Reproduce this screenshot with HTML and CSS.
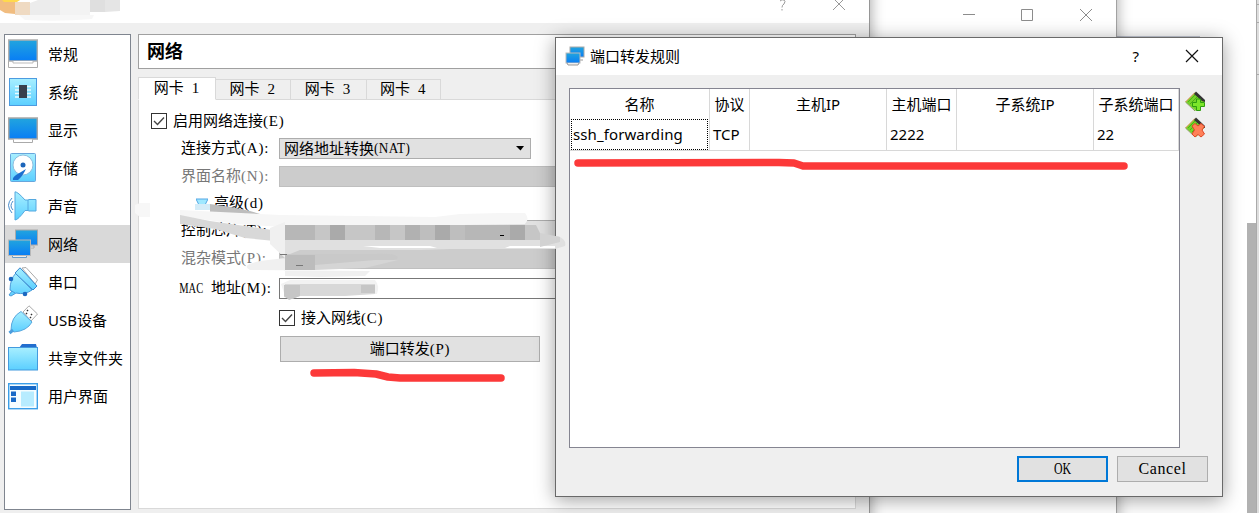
FILE: index.html
```html
<!DOCTYPE html>
<html lang="zh-CN">
<head>
<meta charset="utf-8">
<title>网络</title>
<link rel="stylesheet" href="styles.css">
</head>
<body>
<div class="desktop">
  <div class="edge-strip"><i></i><i></i><i></i></div>
  <div class="scroll-thumb"></div>
  <div class="hint-line"></div>

  <div class="window manager">
    <svg class="caption-icons" width="132" height="14" viewBox="0 0 132 14" fill="none" stroke="#8c8c8c"><path d="M1 6.500H13M59.500 1.500H70.500V12.500H59.500ZM118 1L130 13M130 1L118 13"/></svg>
  </div>

  <div class="window settings">
    <div class="settings-title">
      <svg width="12" height="14" viewBox="0 0 12 14" fill="none" stroke="#999"><path d="M3 1Q5-1 7 0Q9 1 7 4Q5 5 5 7.500M5 9V10.500"/></svg>
      <svg width="12" height="14" viewBox="0 0 12 14" fill="none" stroke="#999"><path d="M0-2L12 10M12-2L0 10"/></svg>
    </div>
    <div class="settings-body">
      <ul class="nav">
        <li><svg width="30" height="30" viewBox="0 0 30 30"><path d="M.5 21V28.500H29.500V21" fill="#fff" stroke="#aaa"/><rect x=".7" y="1" width="28.600" height="21" fill="url(#blue)" stroke="#b0b0b0" stroke-width="1.500"/><path d="M5 22V24H25V22" fill="#fff" stroke="#bbb"/></svg>常规</li>
        <li><svg width="30" height="30" viewBox="0 0 30 30"><rect x="1.500" y="1.500" width="27" height="27" fill="url(#cyan)" stroke="#4c9be0"/><path d="M7 9.500H23M7 13H23M7 16.500H23M7 20H23" stroke="#e8fbff" stroke-width="1.500"/><rect x="11" y="8" width="8" height="13" fill="#38404c"/></svg>系统</li>
        <li><svg width="30" height="30" viewBox="0 0 30 30"><rect x=".7" y="3" width="28.600" height="21" fill="url(#blue)" stroke="#a8a8a8" stroke-width="1.500"/><path d="M5.500 24.500V27.500H24.500V24.500" fill="#fff" stroke="#aaa"/></svg>显示</li>
        <li><svg width="30" height="30" viewBox="0 0 30 30"><rect x="2.500" y=".5" width="25" height="28" rx="1" fill="url(#cyan)" stroke="#68a6dc"/><circle cx="15" cy="12" r="10" fill="#fff" stroke="#90bedd"/><circle cx="15" cy="12" r="2.500" fill="#1b65ba"/><path d="M18 16L8 22Q4 25 5 27L10 27Q14 24 18 16Z" fill="#1a6fd0"/></svg>存储</li>
        <li><svg width="30" height="30" viewBox="0 0 30 30"><path d="M7 .8Q10 1 17 9H20L21 8.500H28V20H21L20 19.500H17Q10 29 7 29Z" fill="url(#cyan)" stroke="#55a8df"/><path d="M20 9V19.500" stroke="#55a8df"/><path d="M4 7Q-3 14 4 22M5 10Q1 15 5 19" fill="none" stroke="#488ccc"/></svg>声音</li>
        <li class="selected"><svg width="30" height="30" viewBox="0 0 30 30"><rect x="7.500" y="1" width="22" height="15" fill="url(#blue)" stroke="#aaa"/><path d="M20 17H26V19H20Z" fill="#eee" stroke="#aaa"/><rect x=".5" y="11" width="22" height="15.500" fill="url(#blue)" stroke="#b8b8b8"/><path d="M4.500 27V28.500H18.500V27" fill="#eee" stroke="#6a9bc8"/></svg>网络</li>
        <li><svg width="30" height="30" viewBox="0 0 30 30"><path d="M14 1L18 .5L29.500 13L27 17Z" fill="#fff" stroke="#aaa"/><path d="M7 26L2 23Q2 12 8 6L24 23Q17 28 8 26L3 29L1 28L4 24" fill="url(#cyan)" stroke="#4a9bda"/><path d="M12 .8L29 19L25 23L7 6Z" fill="url(#cyan)" stroke="#3a88cf"/><circle cx="3" cy="12" r="2.300" fill="#1c68c0"/><circle cx="17" cy="27" r="2.300" fill="#1c68c0"/></svg>串口</li>
        <li><svg width="30" height="30" viewBox="0 0 30 30"><path d="M15 7L21 .8L29.500 9L23 16Z" fill="#fff" stroke="#aaa"/><path d="M19 5L20 6M23 9L24 10M18 8L19 9M22 12L23 13" stroke="#333" stroke-width="1.500"/><path d="M13 6.500L24 17Q19 26 6 27L3 25Q3 12 13 6.500Z" fill="url(#cyan)" stroke="#58a8df"/><path d="M5 25L1.500 28" fill="none" stroke="#4b9dde" stroke-width="3"/></svg>USB设备</li>
        <li><svg width="30" height="30" viewBox="0 0 30 30"><path d="M11 5L14 1H28L29 5Z" fill="#236ece"/><rect x=".5" y="4.500" width="29" height="22.500" fill="url(#cyan)" stroke="#439ade"/></svg>共享文件夹</li>
        <li><svg width="30" height="30" viewBox="0 0 30 30"><rect x=".7" y="2.700" width="28.600" height="25" fill="#f5fdff" stroke="#3b9ee8" stroke-width="1.400"/><path d="M2 5H28V9H2ZM3 10.500H8V15H3ZM3 16.500H8V21H3Z" fill="#1769c7"/><rect x="13" y="10.500" width="13" height="15" fill="#b7ecff"/></svg>用户界面</li>
      </ul>
      <div class="page">
        <h1>网络</h1>
        <div class="tabs"><span class="active">网卡<b>1</b></span><span>网卡<b>2</b></span><span class="wide">网卡<b>3</b></span><span>网卡<b>4</b></span></div>
        <div class="panel">
          <div class="check enable"><svg width="16" height="16" viewBox="0 0 16 16"><use href="#checkbox"/></svg>启用网络连接<b>(E)</b></div>
          <div class="row"><label>连接方式<b>(A):</b></label><div class="field combo">网络地址转换<b class="nat">(NAT)</b><svg width="9" height="5" viewBox="0 0 9 5"><path d="M0 0H8L4.500 4.500Z"/></svg></div></div>
          <div class="row second"><label class="off">界面名称<b>(N):</b></label><div class="field disabled"></div></div>
          <div class="advanced"><svg width="12" height="10" viewBox="0 0 12 10"><path d="M0 1H12L9 7H3Z" fill="#9fe8ff" stroke="#53a6e5"/></svg>高级<b>(d)</b></div>
          <div class="row type"><label>控制芯片<b>(T):</b></label><div class="field grey"></div></div>
          <div class="row mode"><label class="off">混杂模式<b>(P):</b></label><div class="field disabled"></div></div>
          <div class="row mac"><label><b class="mac-word">MAC</b>地址<b>(M):</b></label><div class="field input"></div></div>
          <div class="check cable"><svg width="16" height="16" viewBox="0 0 16 16"><use href="#checkbox"/></svg>接入网线<b>(C)</b></div>
          <div class="button forward">端口转发<b>(P)</b></div>
        </div>
      </div>
    </div>
  </div>

  <div class="window dialog">
    <div class="dialog-title">
      <svg width="20" height="20" viewBox="0 0 20 20"><rect x="5" y="1" width="14" height="10" fill="url(#blue)" stroke="#aaa"/><path d="M14 11V14H18" fill="none" stroke="#999"/><rect x="1" y="7" width="14" height="10" fill="url(#blue)" stroke="#bbb"/><path d="M2 17L3 19H13L14 17" fill="#eee" stroke="#999"/></svg>
      <span>端口转发规则</span>
      <em>?</em>
      <svg width="14" height="14" viewBox="0 0 14 14" stroke="#111" stroke-width="1.200"><path d="M1 1L13 13M13 1L1 13"/></svg>
    </div>
    <div class="dialog-main">
      <div class="rules">
        <div class="tr head"><span>名称</span><span>协议</span><span>主机IP</span><span>主机端口</span><span>子系统IP</span><span>子系统端口</span></div>
        <div class="tr"><span class="focus">ssh_forwarding</span><span>TCP</span><span></span><span>2222</span><span></span><span>22</span></div>
      </div>
      <div class="tools">
        <svg width="21" height="21" viewBox="0 0 21 21"><use href="#card"/><path d="M11.500 8H15.500V11.500H19.500V15.500H15.500V19.500H11.500V15.500H7.500V11.500H11.500Z" fill="#7de62a" stroke="#2f9d10"/></svg>
        <svg width="21" height="21" viewBox="0 0 21 21"><use href="#card"/><path d="M7 9L10 6.500L13 9L16 6.500L19.500 9.500L17 13L19.500 17L16 20L13 17.500L10 20L7 17L9.500 13Z" fill="#ff8058" stroke="#df4728"/></svg>
      </div>
    </div>
    <div class="actions"><div class="button ok"><b>OK</b></div><div class="button cancel"><b>Cancel</b></div></div>
  </div>

  <svg class="marks" width="1259" height="513" viewBox="0 0 1259 513">
    <defs>
      <linearGradient id="blue" x2="0" y2="1"><stop stop-color="#22a5de"/><stop offset="1" stop-color="#087df5"/></linearGradient>
      <linearGradient id="cyan" x2="0" y2="1"><stop stop-color="#a8efff"/><stop offset="1" stop-color="#5bcfff"/></linearGradient>
      <g id="checkbox"><rect x=".5" y=".5" width="15" height="15" fill="#fff" stroke="#333"/><path d="M3 8L6.500 11.500L13 4.500" fill="none" stroke="#444" stroke-width="1.400"/></g>
      <g id="card"><path d="M.5 11L10 1.500L20 10L11 20Z" fill="#75d329"/><path d="M.5 11L10 1.500" stroke="#e08a50"/><path d="M.5 11L10 20" stroke="#8a9a60"/><path d="M3 11L11 3M5 13L13 5M7 15L15 7" stroke="#4cae17"/><path d="M11 .5L20 9V11L17 10L9 3Z" fill="#333"/></g>
    </defs>
    <g class="title-mosaic">
      <path fill="#f1bd80" d="M0 0H15V14L5 13L0 10Z"/><path fill="#ffd94d" d="M2 0H20L17 2H4Z"/><path fill="#efdac2" d="M15 2H30V15H15Z"/><path fill="#ececec" d="M30 3L38 0H60V15H30Z"/><path fill="#f3f3f3" d="M60 0H90V15H60Z"/><path fill="#dfdfdf" d="M90 0H105V12H90Z"/><path fill="#e5e5e5" d="M105 0H120V11L105 12Z"/><path fill="#f7f7f7" d="M19 15H94L92 19Q60 22 25 20Z"/>
    </g>
    <path fill="#f7f7f7" d="M135 205L140 203H150V217H140L135 213Z"/>
    <path fill="#d4ecf8" d="M195 204H210V210H195Z"/>
    <path fill="#bdbdbd" d="M210 204L231 207L250 211L260 214H210Z"/>
    <path fill="#f6f6f6" d="M180 210L280 215L360 216L435 217L460 214L500 213L525 213Q530 219 525 224L400 226L285 227L235 224L180 216Z"/>
    <path fill="#d8d8d8" d="M180 215L210 221L245 226L285 232V242L245 238L215 229L180 224Z"/>
    <path fill="#f0f0f0" d="M270 228L285 222V276L320 277L365 276L370 271L250 270Q240 265 260 261L285 258L270 244Z"/>
    <path fill="#e0e0e0" d="M285 239H540L558 236Q567 240 565 246L555 249H450L420 250H300L285 256Z"/>
    <path fill="#fff" d="M363 246H430L437 248H380ZM510 246H555V248H505Z"/>
    <path fill="#c9c9c9" d="M285 254H375Q401 253 397 259L375 265H315V270H285Z"/>
    <path fill="#bcbcbc" d="M285 255H315V270H285Z"/>
    <path fill="#d5d5d5" d="M315 265L375 260H398L365 268L315 270Z"/>
    <g>
      <path fill="#b7b7b7" d="M285 225H315V240H285ZM375 225H390V240H375ZM465 225H510V240H465Z"/>
      <path fill="#c6c6c6" d="M315 225H330V240H315ZM345 225H375V240H345ZM390 225H405V240H390ZM525 225H536L540 233V240H525Z"/>
      <path fill="#aaa" d="M330 225H345V240H330ZM435 225H450V240H435ZM510 225H525V240H510Z"/>
      <path fill="#b1b1b1" d="M405 225H420V240H405Z"/><path fill="#bebebe" d="M420 225H435V240H420ZM450 225H465V240H450Z"/>
      <path fill="#d2d2d2" d="M540 233L560 237V242L540 247Z"/>
    </g>
    <path d="M500 235.500H504" stroke="#000"/><path d="M296 265.500H303M280 254.500H287" stroke="#777"/>
    <path fill="#f2f2f2" d="M281 284L290 280H375Q380 286 377 294L285 296Z"/>
    <path fill="#d8d8d8" d="M285 284H375V294L345 296H300L292 299L284 297Z"/><path fill="#c6c6c6" d="M284 285H300V296L289 300L284 296ZM361 285H375V293H361Z"/>
    <path class="red" d="M314 373L354 372.500L376 374L388 377L400 378H501"/>
    <path class="red" d="M578 163L779 162.500L794 163L803 166H1124"/>
  </svg>
</div>
</body>
</html>
```

FILE: styles.css
```css
* { box-sizing: border-box; }
body { margin: 0; font: 15px/20px "Noto Sans", "Noto Sans CJK SC", sans-serif; color: #000; }
svg { display: block; flex: none; }
.desktop { position: relative; width: 1259px; height: 513px; overflow: hidden; background: #fff; }
.window { position: absolute; }
.edge-strip { position: absolute; right: 0; top: 0; width: 3px; height: 513px; border-left: 1px solid #aaa; background: #dedede; display: flex; flex-direction: column; padding-top: 4px; gap: 17px; }
.edge-strip i { height: 1px; background: #aaa; }
.edge-strip i:last-child { margin-top: 34px; }
.scroll-thumb { position: absolute; left: 1247px; top: 223px; width: 9px; height: 290px; background: #b1b1b1; }
.hint-line { position: absolute; left: 1117px; top: 36px; width: 83px; height: 1px; background: #c5c9d5; }

.manager { left: 400px; top: -40px; width: 717px; height: 620px; background: #fff; border-right: 1px solid #a2a2a2; box-shadow: 2px 0 12px rgba(0,0,0,.28); display: flex; justify-content: flex-end; padding: 48px 22px 0 0; }
.settings { left: -20px; top: -20px; width: 890px; height: 570px; padding: 20px 0 0 20px; background: #efefef; border-right: 1px solid #969696; box-shadow: 2px 0 12px rgba(0,0,0,.3); }
.settings-title { height: 23px; background: #fff; display: flex; justify-content: flex-end; gap: 44px; padding-right: 24px; }
.settings-body { display: flex; gap: 7px; padding: 11px 13px 0 4px; }
.nav { list-style: none; margin: 0; padding: 0; width: 127px; height: 476px; border: 1px solid #7f858f; background: #fff; }
.nav li { height: 38px; display: flex; align-items: center; gap: 10px; padding-left: 3px; white-space: nowrap; }
.nav .selected { background: #d9d9d9; }
.page { flex: 1; }
.page, .button { font-family: "Liberation Serif", "Noto Sans CJK SC", serif; }
b { font: 400 15px "Liberation Serif", serif; letter-spacing: .8px; white-space: pre; }
h1 { margin: 0; height: 35px; border: 1px solid #a0a0a0; background: #fff; font: bold 18px/31px "Noto Sans CJK SC", sans-serif; padding-left: 8px; }
.tabs { display: flex; align-items: flex-end; height: 31px; margin-bottom: -1px; position: relative; }
.tabs span { width: 74.500px; height: 21px; border: 1px solid #d9d9d9; border-left: 0; display: flex; align-items: center; justify-content: center; gap: 8px; line-height: 19px; }
.tabs .wide { width: 76px; }
.tabs .active { width: 78px; height: 23px; background: #fff; border-left: 1px solid #d9d9d9; border-bottom-color: #fff; }
.panel { height: 410px; border: 1px solid #d9d9d9; background: #fff; padding: 13px 8px 0 12px; display: flex; flex-direction: column; }
.check { display: flex; align-items: center; height: 16px; }
.check svg { margin-right: 6px; }
.row { display: flex; height: 21px; gap: 7px; align-items: center; }
.row label { width: 121px; display: flex; justify-content: flex-end; align-items: center; white-space: nowrap; line-height: 21px; }
.row label b { width: 31px; }
.off { color: #777; }
.field { flex: 1; height: 21px; border: 1px solid #adadad; background: #e1e1e1; }
.enable { margin-bottom: 9px; }
.combo { flex: 0 0 252px; display: flex; align-items: center; padding: 0 5px 0 4px; }
.combo svg { margin-left: auto; }
.nat { transform: scaleX(.88); transform-origin: left; letter-spacing: .4px; }
.second { margin-top: 7px; }
.disabled { background: #ccc; border-color: #bfbfbf; }
.advanced { display: flex; align-items: center; height: 20px; margin: 6px 0 7px 45px; gap: 6px; }
.advanced b { margin-left: -6px; }
.mode { margin-top: 7px; }
.mac { margin-top: 9px; }
.input { background: #fff; border-color: #777; }
.row label .mac-word { width: auto; transform: scaleX(.7); transform-origin: right; margin-right: 8px; letter-spacing: 0; }
.cable { margin: 11px 0 10px 128px; }
.button { display: flex; align-items: center; justify-content: center; height: 26px; border: 1px solid #adadad; background: #e1e1e1; }
.forward { width: 260px; margin-left: 129px; }

.dialog { left: 555px; top: 37px; width: 668px; height: 460px; border: 1px solid #696969; background: #efefef; box-shadow: 0 3px 18px rgba(0,0,0,.38); }
.dialog-title { height: 37px; background: #fff; display: flex; align-items: center; padding: 0 23px 2px 9px; }
.dialog-title span { margin-left: 5px; flex: 1; }
.dialog-title em { font-style: normal; margin-right: 46px; }
.dialog-main { display: flex; padding: 13px 0 0 13px; gap: 5px; }
.rules { width: 611px; height: 360px; border: 1px solid #858591; background: #fff; }
.tr { display: grid; grid-template-columns: 140px 40px 137px 70px 137px 85px; height: 32px; border-bottom: 1px solid #d8d8d8; }
.tr span { border-right: 1px solid #d8d8d8; padding-left: 3px; line-height: 31px; white-space: nowrap; }
.head { height: 30px; border: 0; }
.head span { text-align: center; padding: 0; }
.tr .focus { outline: 1px dotted #000; outline-offset: -1px; margin: 0 2px 0 1px; padding-left: 2px; border: 0; letter-spacing: .1px; }
.tr .focus + span { box-shadow: -1px 0 #d8d8d8; }
.tools { display: flex; flex-direction: column; gap: 5px; padding-top: 3px; }
.actions { display: flex; justify-content: flex-end; gap: 9px; padding: 8px 14px 0 0; }
.actions .button { width: 91px; }
.actions .ok { border: 2px solid #0078d7; }
.actions b { font-size: 16px; letter-spacing: .6px; }
.actions .ok b { transform: scaleX(.74); letter-spacing: 0; }
.marks { position: absolute; left: 0; top: 0; pointer-events: none; }
.red { fill: none; stroke: #fc3939; stroke-width: 7.500; stroke-linecap: round; stroke-linejoin: round; }
```
